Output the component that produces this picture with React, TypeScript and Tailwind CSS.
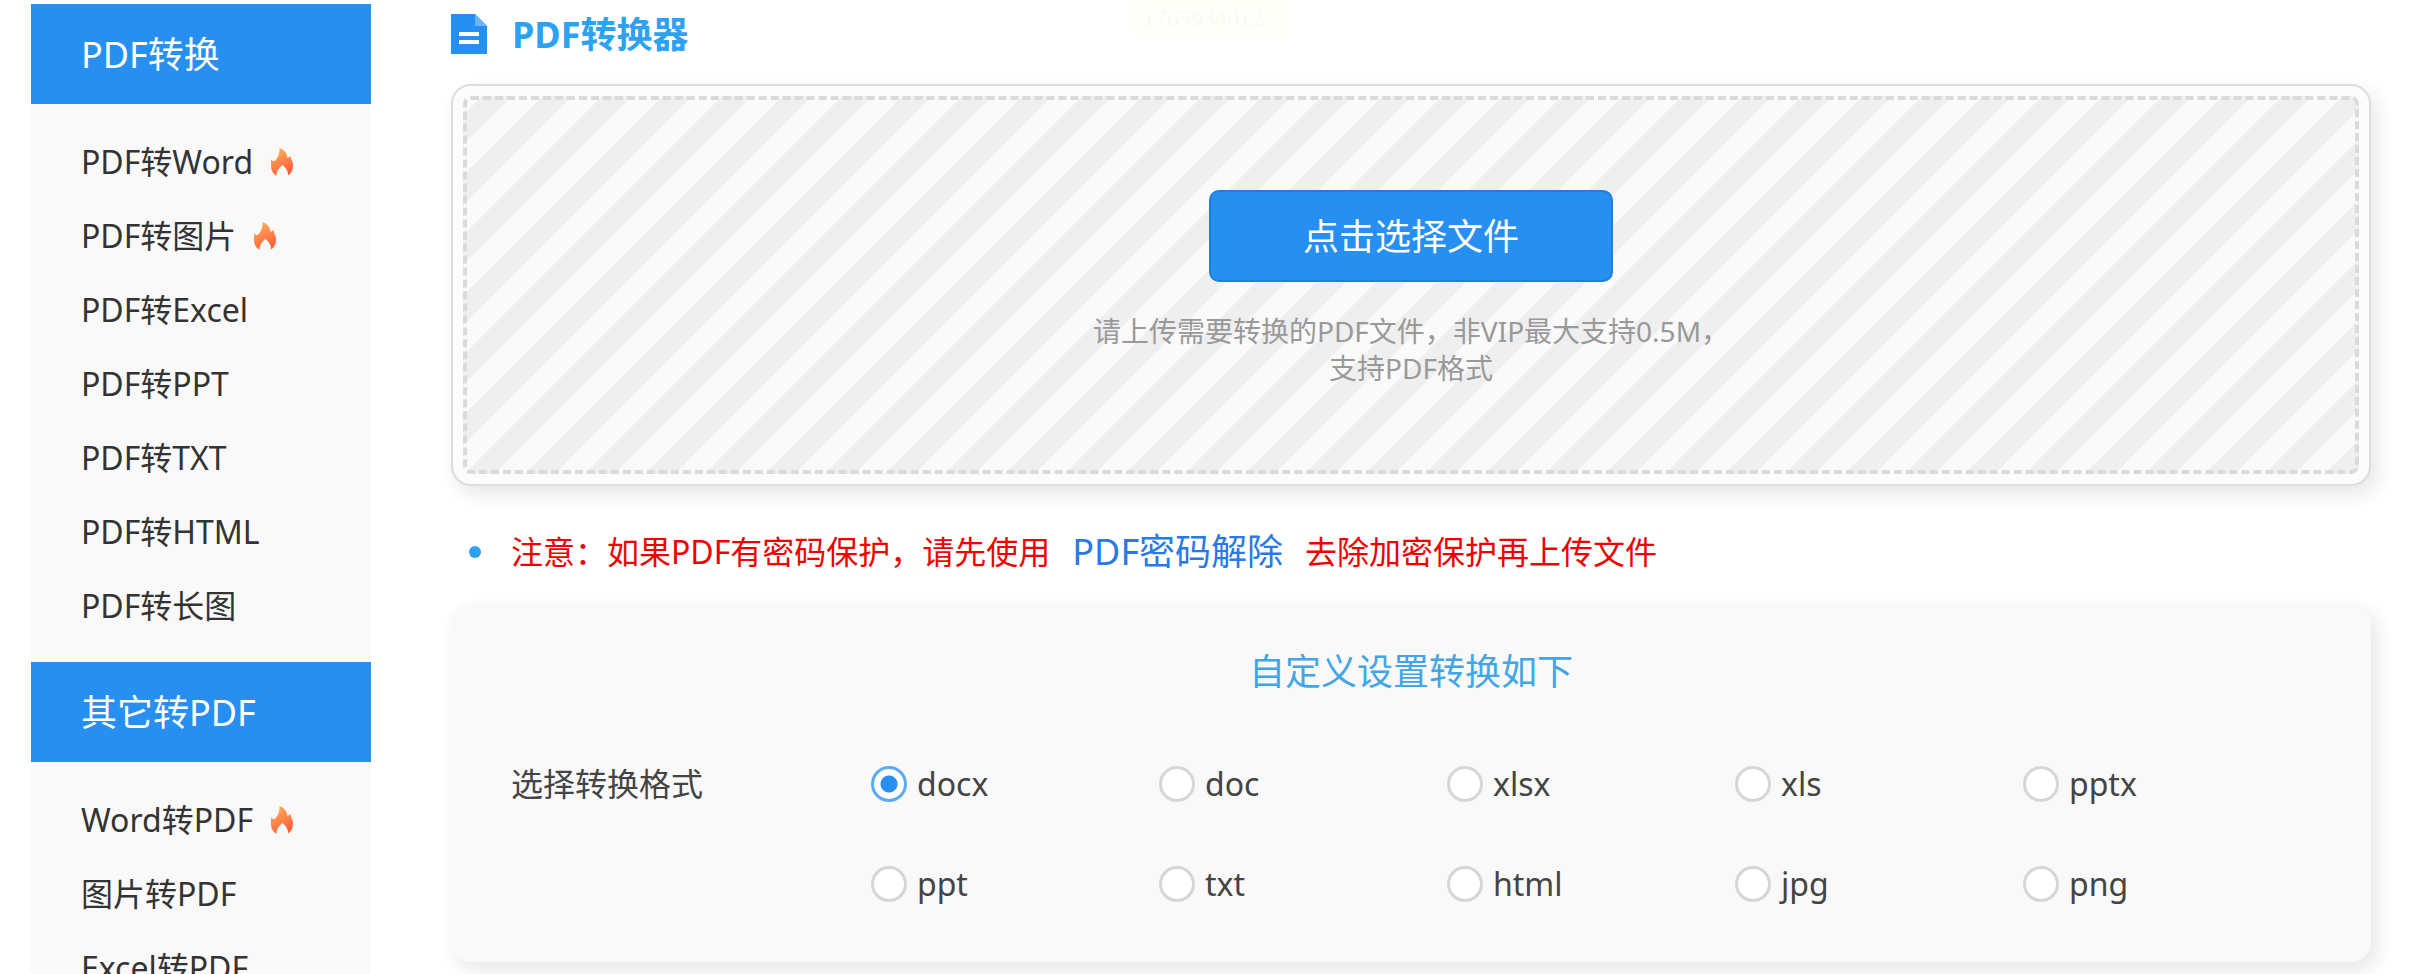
import React, { useState } from 'react';

interface MenuItem {
  name: string;
  hot?: boolean;
}

interface MenuGroup {
  title: string;
  items: MenuItem[];
}

const MENU: MenuGroup[] = [
  {
    title: 'PDF转换',
    items: [
      { name: 'PDF转Word', hot: true },
      { name: 'PDF转图片', hot: true },
      { name: 'PDF转Excel' },
      { name: 'PDF转PPT' },
      { name: 'PDF转TXT' },
      { name: 'PDF转HTML' },
      { name: 'PDF转长图' },
    ],
  },
  {
    title: '其它转PDF',
    items: [{ name: 'Word转PDF', hot: true }, { name: '图片转PDF' }, { name: 'Excel转PDF' }],
  },
];

const FORMATS = ['docx', 'doc', 'xlsx', 'xls', 'pptx', 'ppt', 'txt', 'html', 'jpg', 'png'];

const FlameIcon = () => (
  <svg viewBox="0 0 22 28" className="h-7 w-[22px]" aria-hidden="true">
    <defs>
      <linearGradient id="flame" x1="0.3" y1="0" x2="0.7" y2="1">
        <stop offset="0" stopColor="#ffae5c" />
        <stop offset="1" stopColor="#ff5a36" />
      </linearGradient>
    </defs>
    <path
      d="M8.500 0C13 1.500 16 5 16.500 10c1.300-.4 2.200-1.200 3-2.500.1 2 .5 3.300 1.300 4.700.8 1.500 1.200 3 1.200 5.300 0 4.500-1.800 8-5 10 .4-3.600-1.400-7.200-5.600-10.500C7.500 20.200 5.300 23.500 5.600 27.800 2.200 26 0 22.500 0 18v-6.500c1 1 2 1.500 3.500 1.500C6.800 10.500 8.800 6 8.500 0z"
      fill="url(#flame)"
    />
  </svg>
);

const FileIcon = () => (
  <svg viewBox="0 0 36 40" className="h-10 w-9" aria-hidden="true">
    <path d="M0 0h24l12 12v28H0z" fill="#2490f2" />
    <path d="M24 0l12 12H24z" fill="#6cb5fb" />
    <path d="M8 18h20v4H8zM8 26h20v4H8z" fill="#fff" />
  </svg>
);

const Sidebar = () => (
  <aside className="w-[340px] shrink-0 bg-[#f9f9f9]">
    {MENU.map((group) => (
      <nav key={group.title} aria-label={group.title}>
        <h2 className="flex h-[100px] items-center bg-[#278ff0] pt-0.5 pl-[50px] text-4xl text-white">
          {group.title}
        </h2>
        <ul className="pt-[21px] pb-[19px]">
          {group.items.map((item) => (
            <li key={item.name}>
              <a href="#" className="flex h-[74px] items-center gap-[18px] pl-[50px] text-[32px] text-[#333]">
                {item.name}
                {item.hot && <FlameIcon />}
              </a>
            </li>
          ))}
        </ul>
      </nav>
    ))}
  </aside>
);

const Uploader = () => (
  <section className="rounded-[20px] border-2 border-[#ddd] bg-[#fcfcfc] p-[10px] shadow-[6px_8px_20px_rgba(0,0,0,0.1)]">
    <div className="flex h-[378px] flex-col items-center rounded-lg border-4 border-dashed border-[#dadada] bg-[#fafafa] bg-[linear-gradient(135deg,#efefef_25%,transparent_25%,transparent_50%,#efefef_50%,#efefef_75%,transparent_75%)] bg-size-[60px_60px] bg-[position:12px_0] pt-[90px]">
      <button
        type="button"
        className="h-[92px] w-[404px] rounded-[10px] border-2 border-[#1f7fdc] bg-[#278ff0] pt-0.5 text-4xl text-white"
      >
        点击选择文件
      </button>
      <p className="mt-[31px] max-w-[640px] text-center text-[28px] leading-[37px] text-[#999]">
        请上传需要转换的PDF文件，非VIP最大支持0.5M，
        <br />
        支持PDF格式
      </p>
    </div>
  </section>
);

const Settings = () => {
  const [format, setFormat] = useState('docx');

  return (
    <section className="rounded-[20px] bg-[#f9f9f9] px-[60px] pt-10 pb-7 shadow-[6px_8px_20px_rgba(0,0,0,0.1)]">
      <h2 className="text-center text-4xl leading-[56px] text-[#42a6e6]">自定义设置转换如下</h2>
      <div role="radiogroup" aria-labelledby="format-label" className="mt-[34px] flex">
        <span id="format-label" className="flex h-[100px] w-1/5 items-center text-[32px] text-[#444]">
          选择转换格式
        </span>
        <div className="grid w-4/5 grid-cols-5">
          {FORMATS.map((name) => (
            <label key={name} className="flex h-[100px] items-center gap-[10px] text-[32px] text-[#444]">
              <input
                type="radio"
                name="format"
                value={name}
                checked={format === name}
                onChange={() => setFormat(name)}
                className="size-9 appearance-none rounded-full border-3 border-[#d6d6d6] bg-white checked:border-[#5aaaf6] checked:bg-[radial-gradient(circle,#278ff0_8px,#fff_9px)]"
              />
              {name}
            </label>
          ))}
        </div>
      </div>
    </section>
  );
};

export default function App() {
  return (
    <div className="min-h-screen bg-white font-['Noto_Sans','Noto_Sans_CJK_SC',sans-serif]">
      <div className="flex gap-20 pt-1 pr-[49px] pl-[31px]">
        <Sidebar />
        <main className="min-w-0 flex-1">
          <div className="flex h-20 items-center gap-[25px] pb-[20px]">
            <FileIcon />
            <h1 className="pt-0.5 text-4xl font-bold text-[#2ea2f2]">PDF转换器</h1>
          </div>
          <Uploader />
          <div className="flex h-[118px] items-center pt-[14px] pl-[18px] text-[32px] text-[#f00000]">
            <span className="mr-[30px] size-3 rounded-full bg-[#2ea2f2]" />
            <p className="flex items-center gap-[22px]">
              注意：如果PDF有密码保护，请先使用
              <a href="#" className="text-4xl text-[#2979e6]">
                PDF密码解除
              </a>
              去除加密保护再上传文件
            </p>
          </div>
          <Settings />
        </main>
      </div>
      <div className="absolute top-0 left-[1131px] h-[37px] w-[158px] bg-[#fffffa] px-3 font-['Liberation_Serif',serif] text-2xl leading-9 text-[#fafaf4]">
        1765934012
      </div>
    </div>
  );
}
